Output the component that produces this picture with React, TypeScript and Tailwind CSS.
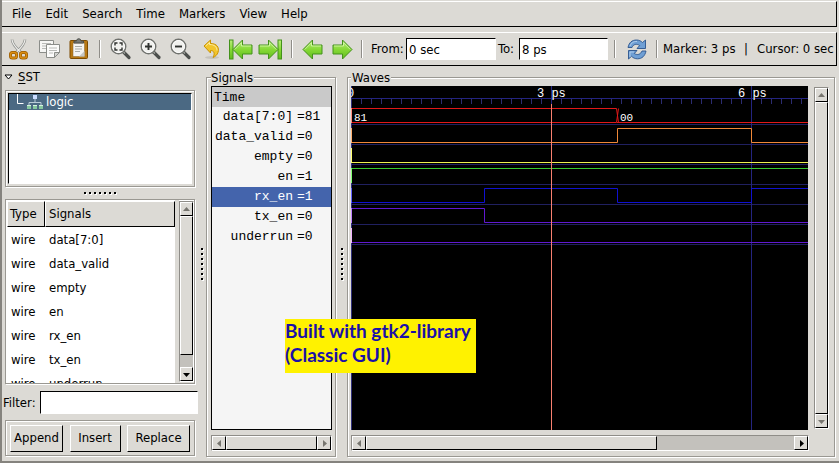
import type { ReactNode } from "react";

const menus = ["File", "Edit", "Search", "Time", "Markers", "View", "Help"];

const wires = ["data[7:0]", "data_valid", "empty", "en", "rx_en", "tx_en", "underrun"];

const signals = [
  { name: "data[7:0]", value: "81" },
  { name: "data_valid", value: "0" },
  { name: "empty", value: "0" },
  { name: "en", value: "1" },
  { name: "rx_en", value: "1", selected: true },
  { name: "tx_en", value: "0" },
  { name: "underrun", value: "0" },
];

const raised = "border border-t-white border-l-white border-r-black border-b-black bg-[#dcdad5]";
const sunken = "border border-t-black border-l-black border-r-white border-b-white bg-white";
const etched = "border border-[#9a9892] shadow-[1px_1px_0_#fff,inset_1px_1px_0_#fff]";

function ToolButton({ label, className, children }: { label: string; className: string; children: ReactNode }) {
  return (
    <button type="button" aria-label={label} className={`flex h-6 shrink-0 items-center justify-center ${className}`}>
      {children}
    </button>
  );
}

function Separator({ className }: { className: string }) {
  return <div className={`h-[18px] w-[2px] shrink-0 border-l border-[#8f8d88] bg-white ${className}`} />;
}

function ZoomIcon({ children }: { children: ReactNode }) {
  return (
    <svg width="22" height="22" viewBox="0 0 22 22" fill="none">
      <path d="M13.5 14 19 19.5" stroke="#4c4f4c" strokeWidth="3.2" strokeLinecap="round" />
      <path d="m13 13.500 2 2" stroke="#a0a39e" strokeWidth="1.500" />
      <circle cx="8.500" cy="8.500" r="7.200" fill="#f1f1ee" stroke="#70726e" strokeWidth="1.500" />
      <circle cx="8.500" cy="8.500" r="6" stroke="#fff" strokeWidth="1" />
      {children}
    </svg>
  );
}

function GreenArrow({ flip, bar }: { flip?: boolean; bar?: boolean }) {
  return (
    <svg width={bar ? 24 : 21} height="21" viewBox={bar ? "0 0 24 21" : "0 0 21 21"} className={flip ? "-scale-x-100" : ""}>
      <defs>
        <linearGradient id="leaf" x1="0" y1="0" x2="0" y2="1">
          <stop offset="0" stopColor="#b9ee7b" />
          <stop offset="0.5" stopColor="#86d936" />
          <stop offset="1" stopColor="#62bb1c" />
        </linearGradient>
      </defs>
      {bar && <rect x="0.5" y="1" width="3.500" height="19" fill="url(#leaf)" stroke="#43921a" />}
      <g transform={bar ? "translate(3 0)" : ""}>
        <path d="M1 10.500 10.500 1v5H20v9h-9.500v5z" fill="url(#leaf)" stroke="#43921a" strokeLinejoin="round" />
        <path d="M2.700 10.500 9.500 3.700V7H19" fill="none" stroke="#d8f8b0" strokeWidth="0.800" />
      </g>
    </svg>
  );
}

function Arrow({ dir, dark }: { dir: "up" | "down" | "left" | "right"; dark?: boolean }) {
  const paths = {
    up: "M1 6 4.500 2 8 6z",
    down: "M1 3 4.500 7 8 3z",
    left: "M6 1 2 4.500 6 8z",
    right: "M3 1 7 4.500 3 8z",
  };
  return (
    <svg width="9" height="9" viewBox="0 0 9 9" className="shrink-0">
      <path d={paths[dir]} fill={dark ? "#000" : "#77756f"} />
    </svg>
  );
}

function VScroll({ thumb, downDark, className }: { thumb: string; downDark?: boolean; className: string }) {
  return (
    <div className={`flex w-[15px] shrink-0 flex-col border border-[#8f8d88] border-r-white border-b-white bg-[#c3c1bc] ${className}`}>
      <button type="button" aria-label="Scroll up" className={`flex h-[14px] shrink-0 items-center justify-center ${raised}`}>
        <Arrow dir="up" />
      </button>
      <div className="min-h-0 flex-1">
        <div className={`${thumb} ${raised}`} />
      </div>
      <button type="button" aria-label="Scroll down" className={`flex h-[14px] shrink-0 items-center justify-center ${raised}`}>
        <Arrow dir="down" dark={downDark} />
      </button>
    </div>
  );
}

function HScroll({ thumb, rightDark, className }: { thumb: string; rightDark?: boolean; className: string }) {
  return (
    <div className={`flex h-4 shrink-0 border border-[#8f8d88] border-r-white border-b-white bg-[#c3c1bc] ${className}`}>
      <button type="button" aria-label="Scroll left" className={`flex w-[14px] shrink-0 items-center justify-center ${raised}`}>
        <Arrow dir="left" />
      </button>
      <div className="min-w-0 flex-1">
        <div className={`h-full ${thumb} ${raised}`} />
      </div>
      <button type="button" aria-label="Scroll right" className={`flex w-[14px] shrink-0 items-center justify-center ${raised}`}>
        <Arrow dir="right" dark={rightDark} />
      </button>
    </div>
  );
}

function Grip({ vertical }: { vertical?: boolean }) {
  return (
    <div className={`flex shrink-0 items-center justify-center gap-[3px] ${vertical ? "w-2 flex-col" : "h-3"}`}>
      {[0, 1, 2, 3, 4, 5, 6].map((n) => (
        <i key={n} className="size-[2px] shrink-0 bg-black shadow-[1px_1px_0_#fff]" />
      ))}
    </div>
  );
}

function Toolbar() {
  return (
    <div className="mr-[2px] mt-[5px] flex h-[34px] shrink-0 items-center overflow-hidden border-t border-r border-b border-t-white border-r-black border-b-black whitespace-nowrap">
      <ToolButton label="Cut" className="ml-[7px] w-5">
        <svg width="20" height="22" viewBox="0 0 20 22" fill="none">
          <path d="M3 1.500c0 4 3 7.500 9 13M16 1.500c0 4-3 7.500-9 13" stroke="#8d8f8b" strokeWidth="2.600" />
          <path d="M3 1.500c0 4 3 7.500 9 13M16 1.500c0 4-3 7.500-9 13" stroke="#eeeeec" strokeWidth="1.200" />
          <rect x="1.500" y="14.500" width="6" height="5.500" rx="2" stroke="#9b5b00" strokeWidth="3" />
          <rect x="11.500" y="14.500" width="6" height="5.500" rx="2" stroke="#9b5b00" strokeWidth="3" />
          <rect x="1.500" y="14.500" width="6" height="5.500" rx="2" stroke="#d98e14" strokeWidth="1.500" />
          <rect x="11.500" y="14.500" width="6" height="5.500" rx="2" stroke="#d98e14" strokeWidth="1.500" />
        </svg>
      </ToolButton>
      <ToolButton label="Copy" className="ml-[10px] w-[22px]">
        <svg width="22" height="20" viewBox="0 0 22 20" stroke="#8b8d89">
          <path d="M.5 1.500h14v12H.5z" fill="#f6f6f4" />
          <path d="M3 4.500h9M3 7h9M3 9.500h6" stroke="#b9bab7" />
          <path d="M7.500 5.500h13v8l-5 5h-8z" fill="#fbfbfa" />
          <path d="M10 9h8M10 11.500h8M10 14h4" stroke="#b9bab7" />
          <path d="M20.500 13.500h-5v5z" fill="#d3d4d1" />
        </svg>
      </ToolButton>
      <ToolButton label="Paste" className="ml-[8px] w-[20px]">
        <svg width="20" height="22" viewBox="0 0 20 22">
          <rect x="1" y="2.500" width="17.500" height="18" rx="1" fill="#b87914" stroke="#7d4b00" />
          <path d="M4 5h11.500v13.500H4z" fill="#f4f4f2" stroke="#85622a" strokeWidth="0.500" />
          <path d="M15.500 13v5.500H10z" fill="#c6c7c4" />
          <path d="M6 8.500h7M6 11h7M6 13.500h5" stroke="#a9aba7" />
          <path d="M5 5V3h2.500c0-3 4.500-3 4.500 0h2.500v2z" fill="#777974" stroke="#4c4e4a" />
        </svg>
      </ToolButton>
      <Separator className="ml-[10px]" />
      <ToolButton label="Zoom fit" className="ml-[9px] w-[22px]">
        <ZoomIcon>
          <path d="M5 7.500V5h2.500M9.500 5H12v2.500M12 9.500V12H9.500M7.500 12H5V9.500" stroke="#30322f" strokeWidth="1.400" />
        </ZoomIcon>
      </ToolButton>
      <ToolButton label="Zoom in" className="ml-2 w-[22px]">
        <ZoomIcon>
          <path d="M8.500 5v7M5 8.500h7" stroke="#30322f" strokeWidth="1.900" />
        </ZoomIcon>
      </ToolButton>
      <ToolButton label="Zoom out" className="ml-2 w-[22px]">
        <ZoomIcon>
          <path d="M5 8.500h7" stroke="#30322f" strokeWidth="1.900" />
        </ZoomIcon>
      </ToolButton>
      <ToolButton label="Undo" className="ml-[11px] w-[18px]">
        <svg width="18" height="21" viewBox="0 0 18 21">
          <ellipse cx="9" cy="18.500" rx="7" ry="1.500" fill="#c4c2bc" />
          <path d="M1 7 7.500 1v3.500c6.500 0 9 4 7.500 9-.6 2-2.500 4-5 5 2-3.500 1.500-7-2.500-7V14z" fill="#f2c52c" stroke="#cb9300" strokeLinejoin="round" />
          <path d="M2.700 7 6.500 3.500v2c5 0 7.500 2.500 7.500 6" fill="none" stroke="#fcec9c" />
        </svg>
      </ToolButton>
      <ToolButton label="To start" className="ml-[8px] w-6"><GreenArrow bar /></ToolButton>
      <ToolButton label="To end" className="ml-[5px] w-6"><GreenArrow bar flip /></ToolButton>
      <Separator className="ml-[9px]" />
      <ToolButton label="Previous edge" className="ml-[9px] w-[21px]"><GreenArrow /></ToolButton>
      <ToolButton label="Next edge" className="ml-[9px] w-[21px]"><GreenArrow flip /></ToolButton>
      <Separator className="ml-[8px]" />
      <label htmlFor="from" className="ml-[8px] w-[35px] shrink-0">From:</label>
      <input id="from" defaultValue="0 sec" className={`h-[22px] w-[90px] shrink-0 px-[2px] outline-none ${sunken}`} />
      <label htmlFor="to" className="ml-[2px] w-[21px] shrink-0">To:</label>
      <input id="to" defaultValue="8 ps" className={`h-[22px] w-[89px] shrink-0 px-[2px] outline-none ${sunken}`} />
      <Separator className="ml-[6px]" />
      <ToolButton label="Reload" className="ml-[11px] w-5">
        <svg width="20" height="21" viewBox="0 0 20 21" fill="#6f9fd4" stroke="#2a538c" strokeWidth="0.900" strokeLinejoin="round">
          <path d="M1 8.500C2 3.500 5 1 9.500 1c2.500 0 4.500 1 6 2.500L18.500 1v8.500H10L12.700 6.500C9.500 4.500 6.500 5 5 8.500z" />
          <path d="M19 12c-1 5-4 7.800-8.500 7.800-2.500 0-4.500-1-6-2.500L1.500 20v-8.500H10l-2.700 3c3.200 2 6.200 1 7.700-2.500z" />
          <path d="M3 7c1.500-3.500 4-4.700 7-4.500M3 18v-5h4" fill="none" stroke="#b5d0ee" />
        </svg>
      </ToolButton>
      <Separator className="ml-[9px]" />
      <span className="ml-[5px] w-[81px] shrink-0">Marker: 3 ps</span>
      <span className="w-[13px] shrink-0">|</span>
      <span>Cursor: 0 sec</span>
    </div>
  );
}

function Sidebar() {
  return (
    <aside className="flex w-[196px] shrink-0 flex-col pb-[5px]">
      <div className="mt-[2px] flex h-[18px] items-center pl-[2px]">
        <svg width="9" height="7" viewBox="0 0 9 7" className="mr-[5px]">
          <path d="M1 1h7L4.500 5z" fill="#fff" stroke="#000" />
        </svg>
        <span><u className="underline-offset-2">S</u>ST</span>
      </div>
      <div className={`mx-[3px] mt-[4px] h-[97px] shrink-0 p-[2px] ${etched}`}>
        <div className={`h-full ${sunken}`}>
          <div className="flex h-4 items-center bg-[#4b6983] leading-4 text-white">
            <svg width="37" height="16" viewBox="0 0 37 16" fill="none" className="shrink-0">
              <path d="M8.500 0v9.500h6" stroke="#fff" />
              <path d="M26 5v3M20 11V8.500h12V11" stroke="#b9ccd8" />
              <path d="M24 1h4v4h-4z" fill="#c9dcff" />
              <path d="M18 11h4v4h-4zM24 11h4v4h-4zM30 11h4v4h-4z" fill="#85c79f" />
              <path d="M18 11h4v1h-4zM24 11h4v1h-4zM30 11h4v1h-4z" fill="#d5f2df" />
            </svg>
            logic
          </div>
        </div>
      </div>
      <Grip />
      <div className={`mx-[3px] flex min-h-0 flex-1 ${etched}`}>
        <div className="min-w-0 flex-1 overflow-hidden border-t border-l border-white bg-white">
          <table className="w-full table-fixed border-separate border-spacing-0 text-left">
            <thead>
              <tr>
                <th className={`h-[26px] w-[38px] px-[2px] font-normal ${raised}`}>Type</th>
                <th className={`h-[26px] px-[3px] font-normal ${raised}`}>Signals</th>
              </tr>
            </thead>
            <tbody>
              {wires.map((wire) => (
                <tr key={wire}>
                  <td className="h-6 p-0 pt-[2px] pl-1">wire</td>
                  <td className="h-6 p-0 pt-[2px] pl-1">{wire}</td>
                </tr>
              ))}
            </tbody>
          </table>
        </div>
        <div className="flex border-l-4 border-[#dcdad5]">
          <VScroll thumb="h-[92%]" downDark className="my-px" />
        </div>
      </div>
      <div className="mt-[7px] flex h-[23px] shrink-0 items-center">
        <label htmlFor="filter" className="w-[38px] shrink-0 pl-px whitespace-nowrap">Filter:</label>
        <input id="filter" className={`h-full w-0 min-w-0 flex-1 px-1 outline-none ${sunken}`} />
      </div>
      <div className={`mx-[3px] mt-[6px] flex h-[36px] shrink-0 items-center justify-between px-1 ${etched}`}>
        <button type="button" className={`h-[27px] w-[53px] ${raised}`}>Append</button>
        <button type="button" className={`h-[27px] w-[51px] ${raised}`}>Insert</button>
        <button type="button" className={`h-[27px] w-[63px] ${raised}`}>Replace</button>
      </div>
    </aside>
  );
}

function SignalList() {
  return (
    <section className={`mt-[11px] mb-1 flex w-[130px] shrink-0 flex-col pr-[3px] pb-[5px] pl-1 ${etched}`}>
      <h2 className="-mt-[9px] h-[17px] self-start bg-[#dcdad5] pr-px leading-[17px]">Signals</h2>
      <div className="min-h-0 flex-1 overflow-hidden border border-black bg-[#f5f5f5] font-['Liberation_Mono',monospace] text-[13px] leading-5">
        <div className="h-5 bg-[#c9c9c9] pt-px pl-[2px]">Time</div>
        {signals.map((s) => (
          <div key={s.name} className={`flex h-5 ${s.selected ? "bg-[#4464ac] text-white" : ""}`}>
            <span className="w-[81px] shrink-0 text-right">{s.name}</span>
            <span className="pl-[4px]">={s.value}</span>
          </div>
        ))}
      </div>
      <HScroll thumb="w-full" className="mt-[5px]" />
    </section>
  );
}

const ticks = Array.from({ length: 200 }, (_, i) => (i + 1) * 10);
const rowLines = [38, 58, 78, 98, 118, 138, 158];

// 66.67px per ps, 20px per trace; the last segment of each trace runs past the right edge
const traces = [
  { color: "#e01818", d: "M0 22.500H265.500L267.500 36.500M0 36.500H265.500L267.500 22.500M266 36.500H4000" },
  { color: "#f08838", d: "M0 56.500H266.500V42.500H400.500V56.500H4000" },
  { color: "#f0f050", d: "M0 76.500H4000" },
  { color: "#38c830", d: "M0 82.500H4000" },
  { color: "#1010d0", d: "M0 116.500H133.500V102.500H266.500V116.500H400.500V102.500H4000" },
  { color: "#6018d0", d: "M0 122.500H133.500V136.500H4000" },
  { color: "#6018d0", d: "M0 156.500H4000" },
];

const edges = ["#ff8c80", "#ffb070", "#ffff70", "#80ff70", "#6060ff", "#c080ff", "#f0b0ff"];

function WaveCanvas() {
  return (
    <svg className="h-full w-full bg-black font-['Liberation_Mono',monospace]" fill="none">
      <path d="M0 12.500H4000" stroke="#242480" />
      {ticks.map((x) => (
        <path key={x} d={`M${x + 0.5} 13v5`} stroke="#2c2c70" />
      ))}
      {rowLines.map((y) => (
        <path key={y} d={`M0 ${y + 0.5}H4000`} stroke="#202060" />
      ))}
      <line x1="400.500" x2="400.500" y1="0" y2="100%" stroke="#242480" />
      <line x1="200.500" x2="200.500" y1="0" y2="18" stroke="#242480" />
      <line x1="0.500" x2="0.500" y1="0" y2="100%" stroke="#30307c" />
      {traces.map((t, i) => (
        <path key={i} d={t.d} stroke={t.color} />
      ))}
      {edges.map((color, i) => (
        <path key={i} d={`M.5 ${22 + i * 20}v15`} stroke={color} />
      ))}
      <line x1="200.500" x2="200.500" y1="18" y2="100%" stroke="#f88070" />
      <g fill="#fff" fontSize="12">
        <text x="-4" y="11">0</text>
        <text x="186" y="11">3 ps</text>
        <text x="387" y="11">6 ps</text>
      </g>
      <g fill="#fff" fontSize="11">
        <text x="3" y="35">81</text>
        <text x="269" y="35">00</text>
      </g>
    </svg>
  );
}

export default function App() {
  return (
    <div className="relative flex h-screen flex-col overflow-hidden border-b-2 border-l-2 border-[#85837e] bg-[#dcdad5] pt-px font-['DejaVu_Sans_Condensed','DejaVu_Sans',sans-serif] text-[13px] leading-4 text-black">
      <nav className="mr-[2px] flex h-[26px] shrink-0 items-center gap-[14px] border-t border-r border-b border-t-white border-r-black border-b-black pl-[10px]">
        {menus.map((m) => (
          <button key={m} type="button">{m}</button>
        ))}
      </nav>
      <Toolbar />
      <main className="flex min-h-0 flex-1">
        <Sidebar />
        <Grip vertical />
        <SignalList />
        <div className="flex w-[11px] shrink-0 justify-center">
          <Grip vertical />
        </div>
        <section className={`mt-[11px] mr-[4px] mb-1 flex min-w-0 flex-1 flex-col pr-[5px] pb-[5px] pl-[3px] ${etched}`}>
          <h2 className="-mt-[9px] h-[17px] self-start bg-[#dcdad5] px-px leading-[17px]">Waves</h2>
          <div className="flex min-h-0 flex-1 gap-[6px]">
            <div className="min-w-0 flex-1">
              <WaveCanvas />
            </div>
            <VScroll thumb="h-full" className="mt-px mb-px" />
          </div>
          <HScroll thumb="w-[68%]" rightDark className="mt-[5px] mr-5" />
        </section>
      </main>
      <div className="absolute top-[319px] left-[283px] h-[54px] w-[191px] bg-[#fff200] font-['Lato',sans-serif] text-[19px] leading-6 font-bold text-[#1a10a8]">
        Built with gtk2-library
        <br />
        (Classic GUI)
      </div>
    </div>
  );
}
